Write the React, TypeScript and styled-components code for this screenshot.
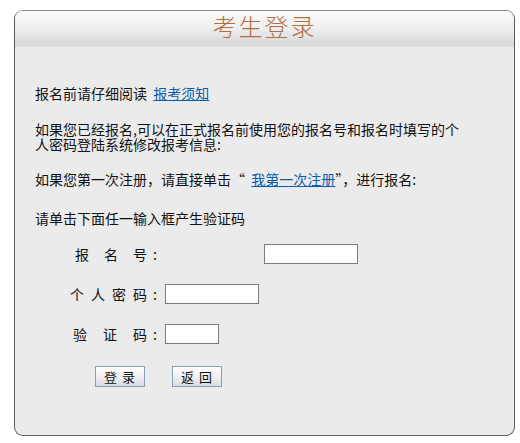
import React from "react";
import styled, { createGlobalStyle } from "styled-components";

const GlobalStyle = createGlobalStyle`
  html, body {
    margin: 0;
    padding: 0;
    background: #ffffff;
  }
  body {
    font-family: "Noto Sans CJK SC", "Liberation Sans", sans-serif;
    font-size: 14px;
    color: #111;
  }
`;

type FieldProps = {
  label: string;
  spacing: number;
  inputWidth: number;
  offset?: number;
  type?: string;
};

function Field({ label, spacing, inputWidth, offset = 0, type = "text" }: FieldProps) {
  return (
    <Row>
      <Label>
        <Chars $gap={spacing}>
          {label.split("").map((c, i) => (
            <span key={i}>{c}</span>
          ))}
        </Chars>
        <Colon>:</Colon>
      </Label>
      <Input type={type} $width={inputWidth} $offset={offset} />
    </Row>
  );
}

export default function App() {
  return (
    <>
      <GlobalStyle />
      <Panel>
        <Header>
          <Title>考生登录</Title>
        </Header>
        <Content>
          <Para $top={0}>
            报名前请仔细阅读&nbsp;&nbsp;<Link href="#">报考须知</Link>
          </Para>
          <Para $top={21}>
            如果您已经报名,可以在正式报名前使用您的报名号和报名时填写的个人密码登陆系统修改报考信息:
          </Para>
          <Para $top={20}>
            如果您第一次注册，请直接单击“&nbsp;&nbsp;<Link href="#">我第一次注册</Link>”，进行报名:
          </Para>
          <Para $top={24}>请单击下面任一输入框产生验证码</Para>
          <Form>
            <Field label="报名号" spacing={15} inputWidth={94} offset={99} />
            <Field label="个人密码" spacing={7} inputWidth={94} type="password" />
            <Field label="验证码" spacing={16} inputWidth={54} />
            <Buttons>
              <Button type="button">登 录</Button>
              <Button type="button">返 回</Button>
            </Buttons>
          </Form>
        </Content>
      </Panel>
    </>
  );
}

const Panel = styled.div`
  box-sizing: border-box;
  margin: 10px 0 0 14px;
  width: 501px;
  height: 426px;
  border: 1px solid #5c5c5c;
  border-top-color: #8a8a8a;
  border-radius: 9px;
  background: #ebebeb;
`;

const Header = styled.div`
  display: flex;
  align-items: center;
  justify-content: center;
  height: 35px;
  border-radius: 8px 8px 0 0;
  background: linear-gradient(to bottom, #fbfbfb 0%, #ececec 55%, #dcdcdc 88%, #d6d6d6 100%);
  border-bottom: 1px solid #e2e2e2;
`;

const Title = styled.h1`
  margin: 0 0 5px 0;
  font-family: "Noto Sans CJK SC", "Liberation Serif", serif;
  font-size: 24px;
  font-weight: 300;
  line-height: 24px;
  letter-spacing: 2px;
  color: #b06f42;
`;

const Content = styled.div`
  padding: 39px 20px 0 20px;
`;

const Para = styled.p<{ $top: number }>`
  margin: ${({ $top }) => $top}px 0 0 0;
  max-width: 432px;
  font-size: 14px;
  line-height: 15px;
  color: #111;
`;

const Link = styled.a`
  color: #0b5cad;
  text-decoration: underline;
`;

const Form = styled.div`
  display: flex;
  flex-direction: column;
  gap: 20px;
  margin-top: 18px;
`;

const Row = styled.div`
  display: flex;
  align-items: center;
  height: 20px;
`;

const Label = styled.div`
  display: flex;
  justify-content: flex-end;
  align-items: center;
  width: 128px;
  font-size: 14px;
  color: #111;
`;

const Chars = styled.div<{ $gap: number }>`
  display: flex;
  gap: ${({ $gap }) => $gap}px;
`;

const Colon = styled.span`
  width: 16px;
  text-align: center;
`;

const Input = styled.input<{ $width: number; $offset: number }>`
  box-sizing: border-box;
  width: ${({ $width }) => $width}px;
  height: 20px;
  margin: 0 0 0 ${({ $offset }) => 2 + $offset}px;
  padding: 0 3px;
  border: 1px solid #7b7b7b;
  background: #fff;
  font-size: 12px;
`;

const Buttons = styled.div`
  display: flex;
  gap: 27px;
  padding-left: 60px;
  margin-top: 2px;
`;

const Button = styled.button`
  box-sizing: border-box;
  width: 50px;
  height: 21px;
  padding: 0;
  border: 1px solid #8a9cb3;
  background: linear-gradient(to bottom, #ffffff 0%, #f0f0f3 50%, #d9dbe3 100%);
  font-family: "Noto Sans CJK SC", "Liberation Sans", sans-serif;
  font-size: 13px;
  line-height: 19px;
  color: #111;
  letter-spacing: 1px;
  cursor: pointer;
`;
